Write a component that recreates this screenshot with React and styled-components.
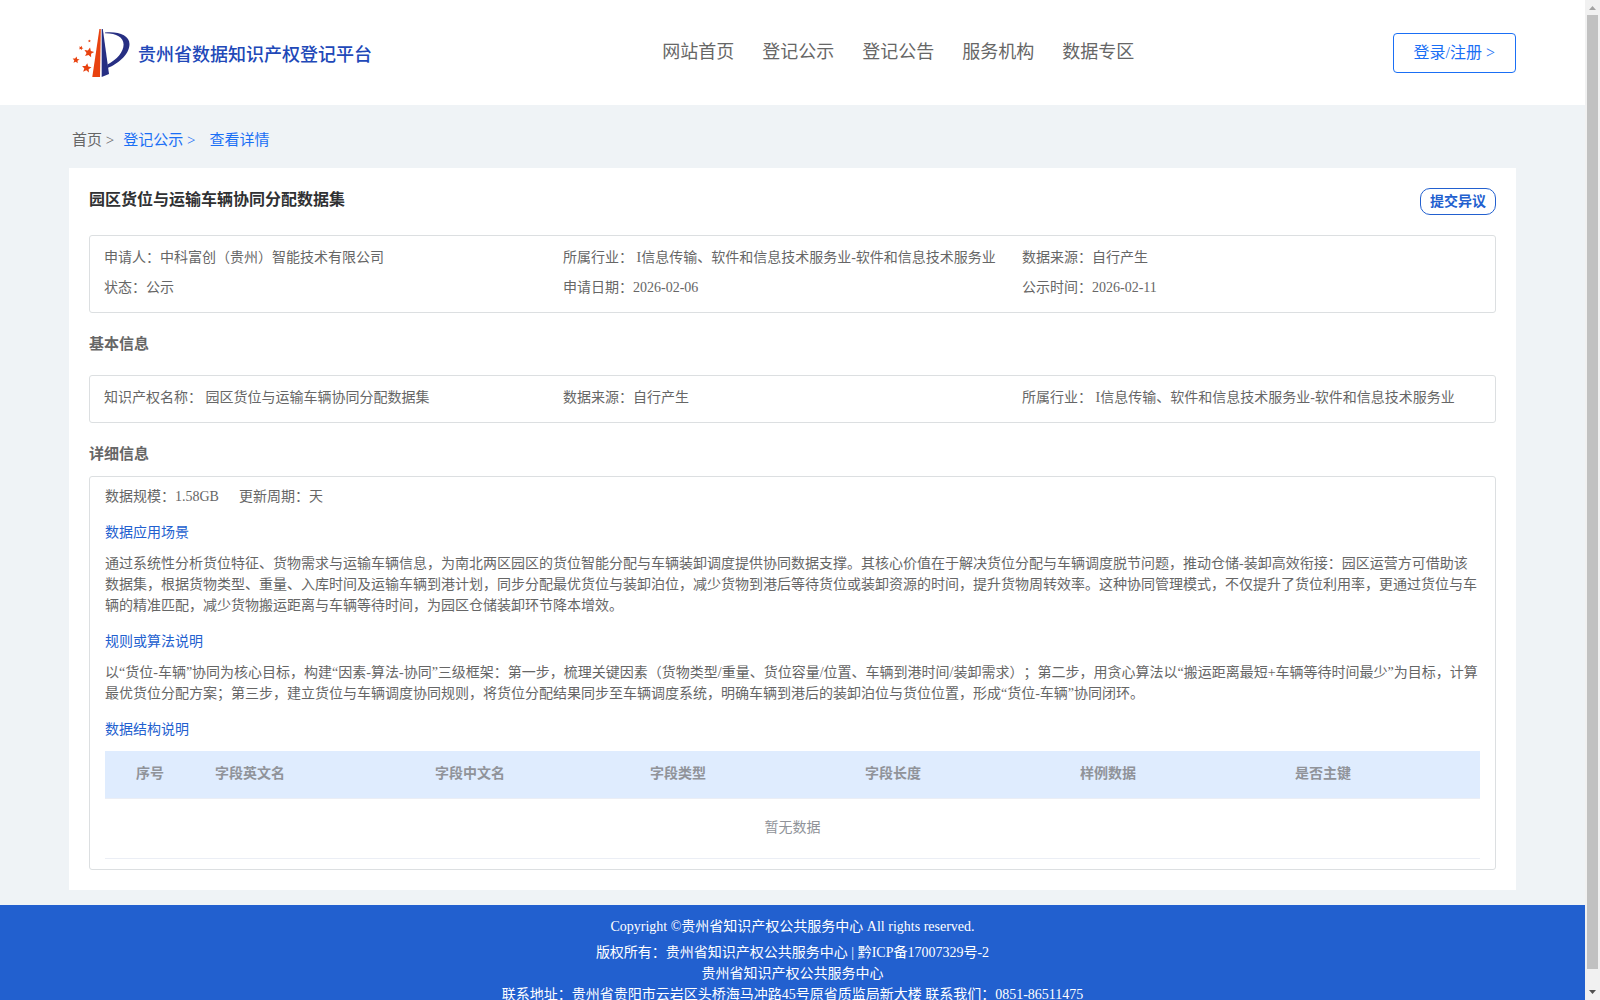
import React from 'react';
import styled, { createGlobalStyle, css } from 'styled-components';

const GlobalStyle = createGlobalStyle`
  * {
    box-sizing: border-box;
  }

  body {
    margin: 0;
    overflow: hidden;
    font-family: 'Liberation Serif', 'Noto Sans CJK SC', serif;
    font-size: 14px;
    line-height: 21px;
    color: #666;
    text-spacing-trim: space-all;
  }

  h1, h2, h3, p, dl, dd {
    margin: 0;
  }
`;

const Screen = styled.div`
  display: flex;
  height: 100vh;
`;

const Page = styled.div`
  flex: 1;
  min-width: 0;
  overflow: hidden;
  background: #eff3f6;
`;

const Header = styled.header`
  display: flex;
  align-items: center;
  height: 105px;
  padding: 0 69px;
  background: #fff;
`;

const Brand = styled.a`
  display: flex;
  align-items: center;
  gap: 8px;
  flex: 0 0 41%;
  padding-left: 3px;
  color: #2148b8;
  font-size: 18px;
  font-weight: 500;
  text-decoration: none;
  white-space: nowrap;
`;

const BrandName = styled.span`
  padding-top: 5px;
`;

const Nav = styled.nav`
  display: flex;
  gap: 28px;
`;

const NavLink = styled.a`
  color: #666;
  font-size: 18px;
  text-decoration: none;
  white-space: nowrap;
`;

const HeaderSide = styled.div`
  display: flex;
  flex: 1;
  justify-content: flex-end;
`;

const LoginButton = styled.button`
  height: 40px;
  padding: 0 20px 3px;
  border: 1px solid #1a6ff5;
  border-radius: 4px;
  background: #fff;
  color: #1a6ff5;
  font-family: inherit;
  font-size: 16px;
  cursor: pointer;
`;

const Main = styled.main`
  padding: 0 69px 15px;
`;

const Breadcrumb = styled.nav`
  display: flex;
  align-items: center;
  gap: 9px;
  height: 63px;
  padding: 8px 3px 0;
  font-size: 15px;
`;

const Crumb = styled.a`
  color: ${({ active }) => (active ? '#1a6ff5' : '#666')};
  text-decoration: none;
  margin-right: ${({ wide }) => (wide ? '5px' : 0)};
`;

const Panel = styled.section`
  padding: 20px;
  background: #fff;
`;

const PanelHead = styled.div`
  display: flex;
  align-items: flex-start;
  justify-content: space-between;
  height: 47px;
`;

const Title = styled.h1`
  color: #303133;
  font-size: 16px;
  line-height: 24px;
`;

const ObjectionButton = styled.button`
  height: 27px;
  padding: 0 9px;
  border: 1px solid #2260cf;
  border-radius: 10px;
  background: #fff;
  color: #2260cf;
  font-family: inherit;
  font-size: 14px;
  font-weight: bold;
  line-height: 20px;
  cursor: pointer;
`;

const box = css`
  border: 1px solid #dcdfe1;
  border-radius: 3px;
`;

const InfoBox = styled.dl`
  ${box};

  display: grid;
  grid-template-columns: repeat(3, 1fr);
  padding: 7px 14px 9px;
`;

const InfoItem = styled.div`
  display: flex;
  line-height: 30px;
  white-space: pre;
`;

const SectionTitle = styled.h2`
  padding: ${({ tight }) => (tight ? '21px 0 12px' : '21px 0 21px')};
  font-size: 15px;
  line-height: 20px;
`;

const DetailBox = styled.div`
  ${box};

  padding: 9px 15px 10px;
`;

const Summary = styled.p`
  display: flex;
  gap: 20px;
`;

const SubTitle = styled.h3`
  padding: 15px 0 10px;
  color: #2260cf;
  font-size: 14px;
  font-weight: normal;
`;

const Table = styled.table`
  width: 100%;
  margin-top: 1px;
  table-layout: fixed;
  border-collapse: collapse;
  color: #909399;
`;

const HeadCell = styled.th`
  height: 47px;
  padding: 0 20px 2px;
  border-bottom: 1px solid #ebeef5;
  background: #dfecfe;
  text-align: ${({ center }) => (center ? 'center' : 'left')};
`;

const EmptyCell = styled.td`
  height: 60px;
  padding: 0 0 2px;
  border-bottom: 1px solid #ebeef5;
  text-align: center;
`;

const Footer = styled.footer`
  padding: 11px 0 20px;
  background: #2260cf;
  color: #fff;
  text-align: center;
`;

const Copyright = styled.p`
  padding-bottom: 5px;
`;

const Scrollbar = styled.div`
  display: flex;
  flex-direction: column;
  align-items: center;
  width: 15px;
  background: #f1f1f1;
`;

const ScrollArrow = styled.svg`
  display: block;
  width: 15px;
  height: ${({ tall }) => (tall ? '31px' : '15px')};
`;

const ScrollThumb = styled.div`
  flex: 1;
  width: 11px;
  background: #c1c1c1;
`;

const nav = ['网站首页', '登记公示', '登记公告', '服务机构', '数据专区'];

const overview = [
  ['申请人：', '中科富创（贵州）智能技术有限公司'],
  ['所属行业：', ' I信息传输、软件和信息技术服务业-软件和信息技术服务业'],
  ['数据来源：', '自行产生'],
  ['状态：', '公示'],
  ['申请日期：', '2026-02-06'],
  ['公示时间：', '2026-02-11'],
];

const basics = [
  ['知识产权名称：', ' 园区货位与运输车辆协同分配数据集'],
  ['数据来源：', '自行产生'],
  ['所属行业：', ' I信息传输、软件和信息技术服务业-软件和信息技术服务业'],
];

const columns = [
  { title: '序号', width: '90px', center: true },
  { title: '字段英文名', width: '16%' },
  { title: '字段中文名', width: '215px' },
  { title: '字段类型', width: '215px' },
  { title: '字段长度', width: '215px' },
  { title: '样例数据', width: '215px' },
  { title: '是否主键' },
];

const star = 'M0 -5 L1.5 -1.8 L5 -1.5 L2.3 0.9 L3.1 4.3 L0 2.5 L-3.1 4.3 L-2.3 0.9 L-5 -1.5 L-1.5 -1.8 Z';

const Logo = () => (
  <svg width="58" height="50" viewBox="72 28 58 50" aria-hidden="true">
    <g fill="#e8420f">
      <path d="M99.4 29 H100.8 L100 77 H92.3 Z" />
      <path d={star} transform="translate(89 52.5) rotate(12)" />
      <path d={star} transform="translate(76 60) rotate(8) scale(.7)" />
      <path d={star} transform="translate(86.6 68) rotate(8) scale(.95)" />
      <path d={star} transform="translate(81 48) rotate(20) scale(.46)" />
      <path d={star} transform="translate(89.4 41) scale(.3)" />
    </g>
    <g fill="#272f83">
      <path d="M101.7 29 H102.8 L109 74 L101.7 77 Z" />
      <path d="M105 32.5 C118 31 129.5 35 129.5 44 C129.5 55 117 64.5 107.5 68 V64.5 C117 59.5 123.6 52 123.6 44.5 C123.6 37 116 33 105 33.2 Z" />
    </g>
  </svg>
);

const Info = ({ items }) => (
  <InfoBox>
    {items.map(([label, value]) => (
      <InfoItem key={label}>
        <dt>{label}</dt>
        <dd>{value}</dd>
      </InfoItem>
    ))}
  </InfoBox>
);

const App = () => (
  <Screen lang="zh-CN">
    <GlobalStyle />
    <Page>
      <Header>
        <Brand href="#">
          <Logo />
          <BrandName>贵州省数据知识产权登记平台</BrandName>
        </Brand>
        <Nav>
          {nav.map(item => (
            <NavLink key={item} href="#">
              {item}
            </NavLink>
          ))}
        </Nav>
        <HeaderSide>
          <LoginButton type="button">登录/注册 &gt;</LoginButton>
        </HeaderSide>
      </Header>
      <Main>
        <Breadcrumb>
          <Crumb href="#">首页 &gt;</Crumb>
          <Crumb href="#" active="true" wide="true">
            登记公示 &gt;
          </Crumb>
          <Crumb href="#" active="true">
            查看详情
          </Crumb>
        </Breadcrumb>
        <Panel>
          <PanelHead>
            <Title>园区货位与运输车辆协同分配数据集</Title>
            <ObjectionButton type="button">提交异议</ObjectionButton>
          </PanelHead>
          <Info items={overview} />
          <SectionTitle>基本信息</SectionTitle>
          <Info items={basics} />
          <SectionTitle tight="true">详细信息</SectionTitle>
          <DetailBox>
            <Summary>
              <span>数据规模：1.58GB</span>
              <span>更新周期：天</span>
            </Summary>
            <SubTitle>数据应用场景</SubTitle>
            <p>
              通过系统性分析货位特征、货物需求与运输车辆信息，为南北两区园区的货位智能分配与车辆装卸调度提供协同数据支撑。其核心价值在于解决货位分配与车辆调度脱节问题，推动仓储-装卸高效衔接：园区运营方可借助该数据集，根据货物类型、重量、入库时间及运输车辆到港计划，同步分配最优货位与装卸泊位，减少货物到港后等待货位或装卸资源的时间，提升货物周转效率。这种协同管理模式，不仅提升了货位利用率，更通过货位与车辆的精准匹配，减少货物搬运距离与车辆等待时间，为园区仓储装卸环节降本增效。
            </p>
            <SubTitle>规则或算法说明</SubTitle>
            <p>
              以“货位-车辆”协同为核心目标，构建“因素-算法-协同”三级框架：第一步，梳理关键因素（货物类型/重量、货位容量/位置、车辆到港时间/装卸需求）；第二步，用贪心算法以“搬运距离最短+车辆等待时间最少”为目标，计算最优货位分配方案；第三步，建立货位与车辆调度协同规则，将货位分配结果同步至车辆调度系统，明确车辆到港后的装卸泊位与货位位置，形成“货位-车辆”协同闭环。
            </p>
            <SubTitle>数据结构说明</SubTitle>
            <Table>
              <colgroup>
                {columns.map(({ title, width }) => (
                  <col key={title} width={width} />
                ))}
              </colgroup>
              <thead>
                <tr>
                  {columns.map(({ title, center }) => (
                    <HeadCell key={title} center={center ? 'true' : undefined}>
                      {title}
                    </HeadCell>
                  ))}
                </tr>
              </thead>
              <tbody>
                <tr>
                  <EmptyCell colSpan={columns.length}>暂无数据</EmptyCell>
                </tr>
              </tbody>
            </Table>
          </DetailBox>
        </Panel>
      </Main>
      <Footer>
        <Copyright>Copyright ©贵州省知识产权公共服务中心 All rights reserved.</Copyright>
        <p>版权所有：贵州省知识产权公共服务中心 | 黔ICP备17007329号-2</p>
        <p>贵州省知识产权公共服务中心</p>
        <p>联系地址：贵州省贵阳市云岩区头桥海马冲路45号原省质监局新大楼 联系我们：0851-86511475</p>
      </Footer>
    </Page>
    <Scrollbar aria-hidden="true">
      <ScrollArrow viewBox="0 0 15 15">
        <path d="M4 10 L7.5 6 L11 10 Z" fill="#a3a3a3" />
      </ScrollArrow>
      <ScrollThumb />
      <ScrollArrow viewBox="0 0 15 31" tall="true">
        <path d="M4 21 L7.5 25 L11 21 Z" fill="#505050" />
      </ScrollArrow>
    </Scrollbar>
  </Screen>
);

export default App;
